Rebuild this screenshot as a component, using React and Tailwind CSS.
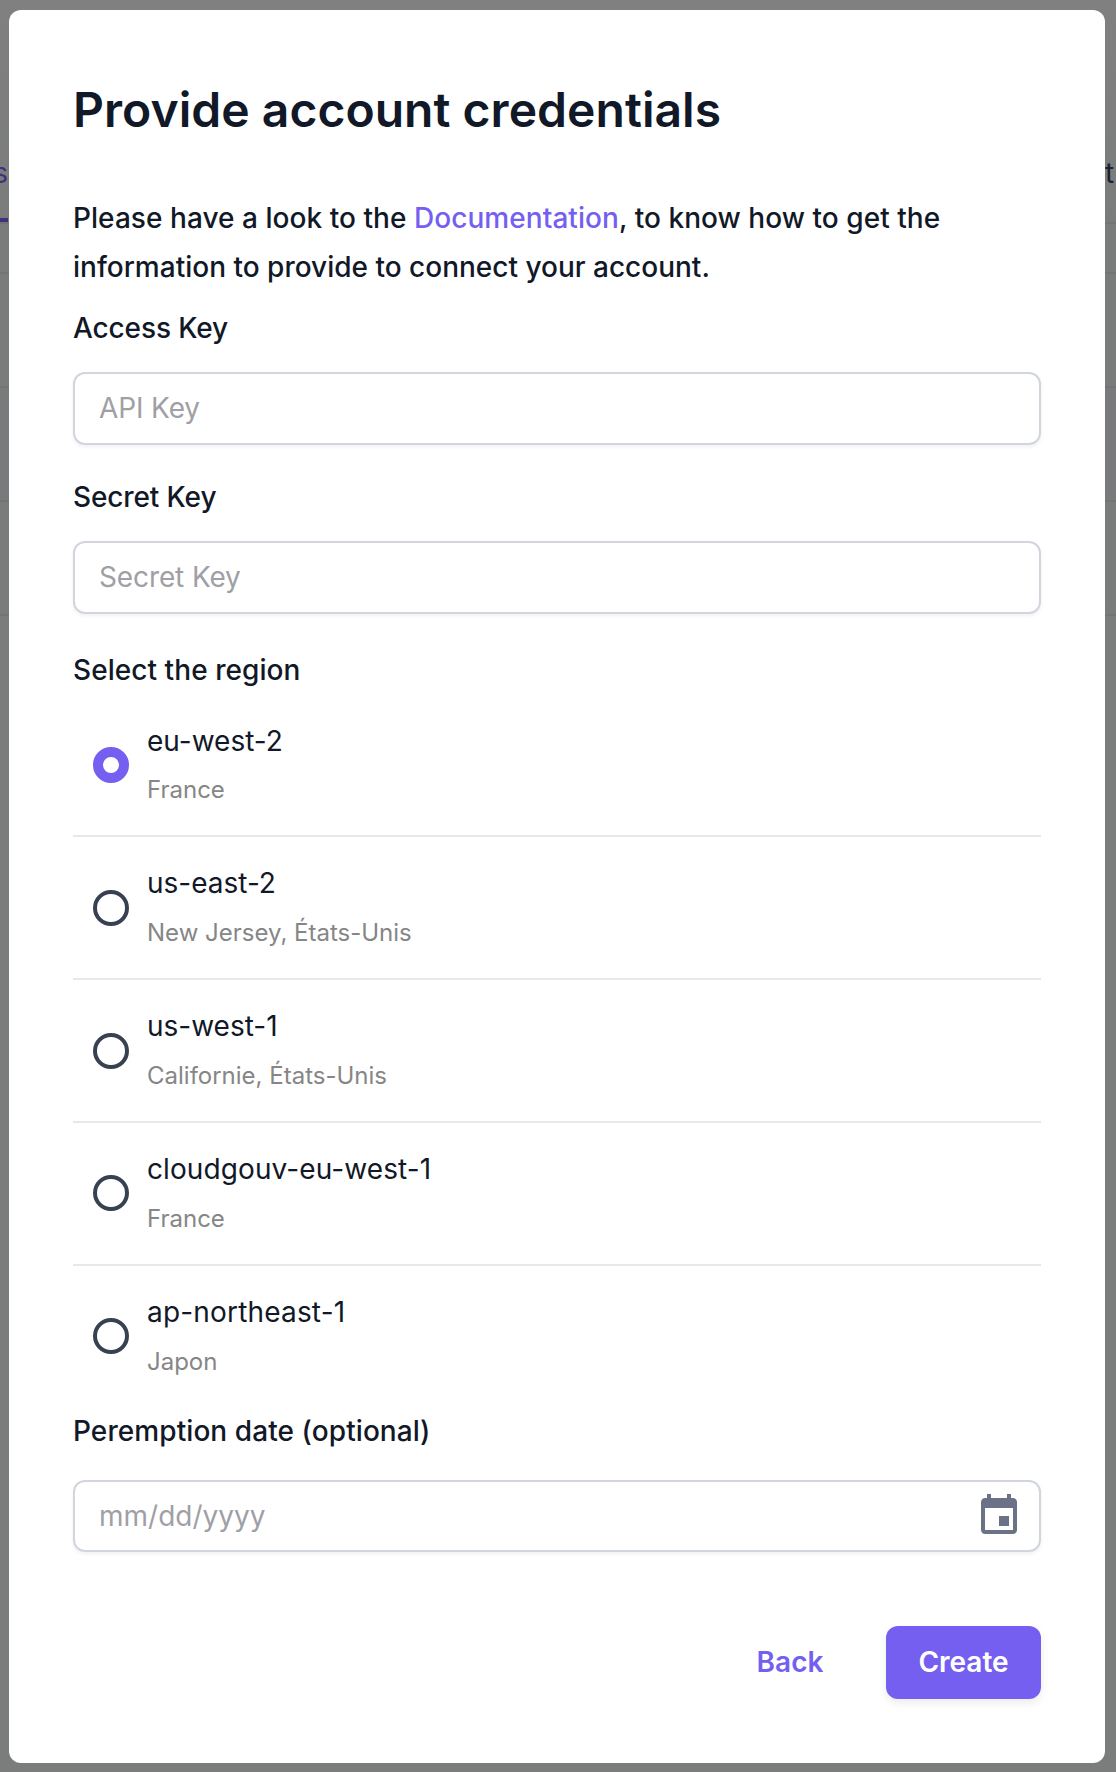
const regions = [
  { id: "eu-west-2", place: "France", selected: true, text: "mt-[23px]", radio: "" },
  { id: "us-east-2", place: "New Jersey, États-Unis", text: "mt-[22px]", radio: "" },
  { id: "us-west-1", place: "Californie, États-Unis", text: "mt-[22px]", radio: "" },
  { id: "cloudgouv-eu-west-1", place: "France", text: "mt-[22px] tracking-[0.1px]", radio: "mb-0.5" },
  { id: "ap-northeast-1", place: "Japon", text: "mt-[22px] tracking-[0.18px]", radio: "mb-0.5" },
];

const inputClass =
  "block w-full rounded-xl border-2 border-[#d1d5de] bg-white px-6 text-[28px] leading-9 text-[#111827] shadow-[0_2px_4px_rgba(0,0,0,0.06)] placeholder:text-[#9fa0a6] placeholder:opacity-100 outline-none";

function TextField({ label, placeholder, className }) {
  return (
    <label className={className}>
      <span className="block text-[28px] leading-[49px] font-medium tracking-[-0.12px]">{label}</span>
      <input className={inputClass + " mt-[19px] h-[73px] pb-0.5 tracking-[-0.12px]"} placeholder={placeholder} />
    </label>
  );
}

function RegionRow({ region }) {
  return (
    <li className="flex h-[143px] items-center border-b-2 border-[#e7e7ec] pl-5 last:border-transparent">
      <span
        className={
          (region.selected
            ? "size-9 rounded-full border-10 border-[#755ff0] bg-white "
            : "size-9 rounded-full border-4 border-[#374151] bg-white ") + region.radio
        }
      />
      <span className={"ml-[18px] flex flex-col self-start " + region.text}>
        <span className="text-[28px] leading-[48px]">{region.id}</span>
        <span
          className={
            region.selected
              ? "text-[24px] leading-[49px] tracking-normal text-[#868686]"
              : "mt-px text-[24px] leading-[49px] tracking-normal text-[#868686]"
          }
        >
          {region.place}
        </span>
      </span>
    </li>
  );
}

function Backdrop() {
  return (
    <div className="flex h-full flex-col">
      <div className="box-content flex h-[222px] items-end justify-between border-b-2 border-[#737574] bg-linear-to-b from-[#808080] to-[#7a7c7b]">
        <div className="flex h-[73px] w-2 flex-col border-b-4 border-[#40317f] pt-1">
          <span className="flex w-2 justify-end text-[28px] leading-10 text-[#40317f]">s</span>
        </div>
        <div className="flex h-[69px] w-[11px] flex-col">
          <span className="text-[28px] leading-10 text-[#1b2230]">t</span>
        </div>
      </div>
      <div className="h-[50px] border-b-2 border-[#737574] bg-[#7a7c7b]" />
      <div className="h-[114px] border-b-2 border-[#737574] bg-[#7a7c7b]" />
      <div className="h-[114px] border-b-2 border-[#717375] bg-[#787a7b]" />
      <div className="h-[114px] border-b-2 border-[#737574] bg-[#7a7c7b]" />
      <div className="flex-1 bg-[#7b7c7c]" />
    </div>
  );
}

export default function App() {
  return (
    <div className="relative h-[1772px] w-[1116px] overflow-hidden bg-[#7b7c7c] font-['Inter',sans-serif] text-[#111827]">
      <Backdrop />
      <div className="absolute top-[10px] left-[9px] flex h-[1753px] w-[1096px] flex-col rounded-xl bg-white px-16 pt-[72px]">
        <h1 className="text-[48px] leading-[56px] font-semibold tracking-[0.04px]">Provide account credentials</h1>
        <p className="mt-14 text-[28px] leading-[49px] font-medium">
          <span className="tracking-[0.05px]">
            Please have a look to the <a className="text-[#755ff0]">Documentation</a>, to know how to get the
          </span>
          <br />
          information to provide to connect your account.
        </p>
        <TextField label="Access Key" placeholder="API Key" className="mt-3" />
        <TextField label="Secret Key" placeholder="Secret Key" className="mt-7" />
        <h2 className="mt-8 text-[28px] leading-[49px] font-medium tracking-[0.06px]">Select the region</h2>
        <ul className="-mt-px flex flex-col">
          {regions.map((region) => (
            <RegionRow key={region.id} region={region} />
          ))}
        </ul>
        <label className="-mt-0.5 block">
          <span className="block text-[28px] leading-[49px] font-medium tracking-[0.08px]">
            Peremption date (optional)
          </span>
          <span className="relative mt-6 block">
            <input className={inputClass + " h-[72px]"} placeholder="mm/dd/yyyy" />
            <svg viewBox="0 0 24 24" className="absolute top-3 right-[18px] size-12 fill-[#6b7287]">
              <path d="M17 12h-5v5h5v-5zM16 1v2H8V1H6v2H5c-1.11 0-1.99.9-1.99 2L3 19c0 1.1.89 2 2 2h14c1.1 0 2-.9 2-2V5c0-1.1-.9-2-2-2h-1V1h-2zm3 18H5V8h14v11z" />
            </svg>
          </span>
        </label>
        <div className="mt-[74px] flex justify-end">
          <button className="h-[73px] w-[129px] pb-0.5 pl-px text-[28px] font-semibold text-[#755ff0]">Back</button>
          <button className="ml-8 h-[73px] w-[155px] rounded-xl bg-[#755ff0] pb-0.5 text-[28px] font-semibold text-white shadow-[0_4px_8px_rgba(0,0,0,0.08)]">
            Create
          </button>
        </div>
      </div>
    </div>
  );
}
